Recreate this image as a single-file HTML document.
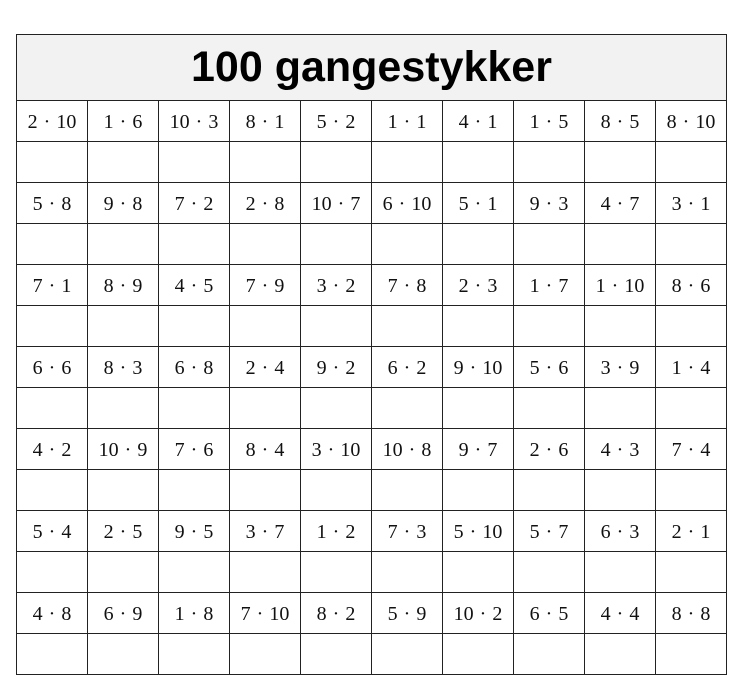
<!DOCTYPE html>
<html><head><meta charset="utf-8"><style>
html,body{margin:0;padding:0;background:#fff;width:741px;height:660px;overflow:hidden}
.t{position:absolute;left:16px;top:34px;width:711px;border-collapse:collapse;table-layout:fixed}
.t td{border:1.5px solid #222;height:41px;padding:2px 0 0 0;box-sizing:border-box;text-align:center;font-family:"Liberation Serif",serif;font-size:20px;color:#111;white-space:nowrap;overflow:hidden;word-spacing:1px}
.t th{border:1.5px solid #222;height:66px;box-sizing:border-box;background:#f2f2f2;font-family:"Liberation Sans",sans-serif;font-weight:bold;font-size:43px;padding:0}
</style></head><body>
<table class="t">
<tr><th colspan="10">100 gangestykker</th></tr>
<tr><td>2 · 10</td><td>1 · 6</td><td>10 · 3</td><td>8 · 1</td><td>5 · 2</td><td>1 · 1</td><td>4 · 1</td><td>1 · 5</td><td>8 · 5</td><td>8 · 10</td></tr>
<tr><td></td><td></td><td></td><td></td><td></td><td></td><td></td><td></td><td></td><td></td></tr>
<tr><td>5 · 8</td><td>9 · 8</td><td>7 · 2</td><td>2 · 8</td><td>10 · 7</td><td>6 · 10</td><td>5 · 1</td><td>9 · 3</td><td>4 · 7</td><td>3 · 1</td></tr>
<tr><td></td><td></td><td></td><td></td><td></td><td></td><td></td><td></td><td></td><td></td></tr>
<tr><td>7 · 1</td><td>8 · 9</td><td>4 · 5</td><td>7 · 9</td><td>3 · 2</td><td>7 · 8</td><td>2 · 3</td><td>1 · 7</td><td>1 · 10</td><td>8 · 6</td></tr>
<tr><td></td><td></td><td></td><td></td><td></td><td></td><td></td><td></td><td></td><td></td></tr>
<tr><td>6 · 6</td><td>8 · 3</td><td>6 · 8</td><td>2 · 4</td><td>9 · 2</td><td>6 · 2</td><td>9 · 10</td><td>5 · 6</td><td>3 · 9</td><td>1 · 4</td></tr>
<tr><td></td><td></td><td></td><td></td><td></td><td></td><td></td><td></td><td></td><td></td></tr>
<tr><td>4 · 2</td><td>10 · 9</td><td>7 · 6</td><td>8 · 4</td><td>3 · 10</td><td>10 · 8</td><td>9 · 7</td><td>2 · 6</td><td>4 · 3</td><td>7 · 4</td></tr>
<tr><td></td><td></td><td></td><td></td><td></td><td></td><td></td><td></td><td></td><td></td></tr>
<tr><td>5 · 4</td><td>2 · 5</td><td>9 · 5</td><td>3 · 7</td><td>1 · 2</td><td>7 · 3</td><td>5 · 10</td><td>5 · 7</td><td>6 · 3</td><td>2 · 1</td></tr>
<tr><td></td><td></td><td></td><td></td><td></td><td></td><td></td><td></td><td></td><td></td></tr>
<tr><td>4 · 8</td><td>6 · 9</td><td>1 · 8</td><td>7 · 10</td><td>8 · 2</td><td>5 · 9</td><td>10 · 2</td><td>6 · 5</td><td>4 · 4</td><td>8 · 8</td></tr>
<tr><td></td><td></td><td></td><td></td><td></td><td></td><td></td><td></td><td></td><td></td></tr>
</table>
</body></html>
